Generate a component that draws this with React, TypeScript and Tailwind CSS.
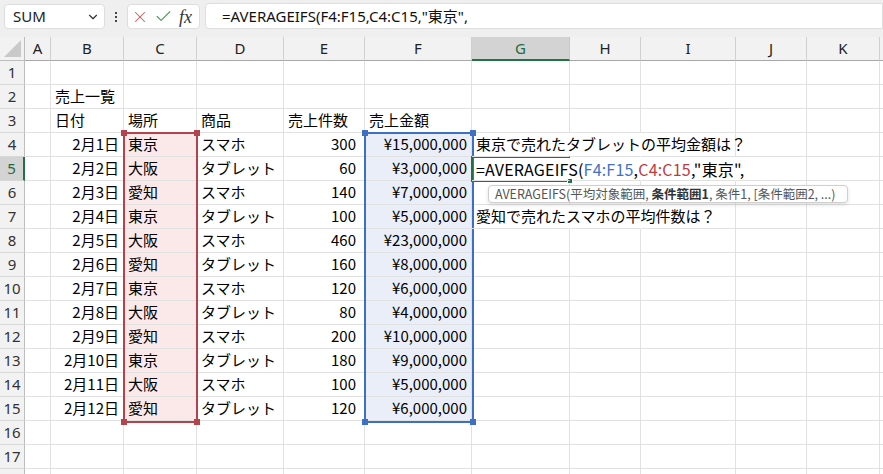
import React from "react";
import { ChevronDown, X, Check } from "lucide-react";

type CellDef = {
  t?: React.ReactNode;
  a?: "l" | "r";
  bg?: string;
  nr?: boolean;
  z?: boolean;
  pr?: string;
};

const colLetters = ["A", "B", "C", "D", "E", "F", "G", "H", "I", "J", "K", ""];

const data: [string, string, string, string, string][] = [
  ["2月1日", "東京", "スマホ", "300", "¥15,000,000"],
  ["2月2日", "大阪", "タブレット", "60", "¥3,000,000"],
  ["2月3日", "愛知", "スマホ", "140", "¥7,000,000"],
  ["2月4日", "東京", "タブレット", "100", "¥5,000,000"],
  ["2月5日", "大阪", "スマホ", "460", "¥23,000,000"],
  ["2月6日", "愛知", "タブレット", "160", "¥8,000,000"],
  ["2月7日", "東京", "スマホ", "120", "¥6,000,000"],
  ["2月8日", "大阪", "タブレット", "80", "¥4,000,000"],
  ["2月9日", "愛知", "スマホ", "200", "¥10,000,000"],
  ["2月10日", "東京", "タブレット", "180", "¥9,000,000"],
  ["2月11日", "大阪", "スマホ", "100", "¥5,000,000"],
  ["2月12日", "愛知", "タブレット", "120", "¥6,000,000"],
];

function buildRow(r: number): CellDef[] {
  const row: CellDef[] = Array.from({ length: 12 }, () => ({}));
  if (r === 2) row[1] = { t: "売上一覧" };
  if (r === 3) {
    row[1] = { t: "日付" };
    row[2] = { t: "場所" };
    row[3] = { t: "商品" };
    row[4] = { t: "売上件数" };
    row[5] = { t: "売上金額" };
  }
  if (r >= 4 && r <= 15) {
    const d = data[r - 4];
    row[1] = { t: d[0], a: "r" };
    row[2] = { t: d[1], bg: "bg-[#fbe9ea]" };
    row[3] = { t: d[2] };
    row[4] = { t: d[3], a: "r", pr: "pr-[8px]" };
    row[5] = { t: d[4], a: "r", bg: "bg-[#e9eef8]" };
  }
  if (r === 4) {
    row[6] = { t: "東京で売れたタブレットの平均金額は？", nr: true, z: true };
    row[7] = { nr: true };
  }
  if (r === 5) {
    row[6] = {
      t: (
        <span className="text-[16px] tracking-[0.2px]">
          {"=AVERAGEIFS("}
          <span className="text-[#3f72c6]">F4:F15</span>
          {","}
          <span className="text-[#c0393f]">C4:C15</span>
          {',"東京",'}
        </span>
      ),
      nr: true,
      z: true,
    };
    row[7] = { nr: true };
    row[8] = { nr: true };
  }
  if (r === 7) {
    row[6] = { t: "愛知で売れたスマホの平均件数は？", nr: true, z: true };
    row[7] = { nr: true };
  }
  return row;
}

function Handle({ className }: { className: string }) {
  return <div className={`absolute w-[6px] h-[6px] ${className}`} />;
}

export default function App() {
  const rows = Array.from({ length: 18 }, (_, i) => i + 1);
  return (
    <div
      className="w-[883px] h-[474px] overflow-hidden bg-white text-black"
      style={{ fontFamily: '"Noto Sans CJK JP", "Noto Sans", sans-serif' }}
    >
      {/* formula bar */}
      <div className="h-[37px] bg-[#efefef] flex items-start pt-[4px] pl-[4px]">
        <div className="w-[101px] h-[25px] bg-white border border-[#dedede] rounded-[4px] flex items-center justify-between pl-[8px] pr-[4px]">
          <span className="text-[15px] text-[#222]" style={{ fontFamily: '"Noto Sans", sans-serif' }}>SUM</span>
          <ChevronDown size={14} strokeWidth={2} className="text-[#333]" />
        </div>
        <div className="w-[22px] h-[25px] flex flex-col items-center justify-center gap-[2px]">
          <div className="w-[2px] h-[2px] bg-[#444]" />
          <div className="w-[2px] h-[2px] bg-[#444]" />
          <div className="w-[2px] h-[2px] bg-[#444]" />
        </div>
        <div className="w-[73px] h-[25px] bg-white border border-[#dedede] rounded-[4px] flex items-center pl-[3px] gap-[5px]">
          <X size={18} strokeWidth={1.4} className="text-[#d0575a]" />
          <Check size={19} strokeWidth={1.4} className="text-[#4f9b5d]" />
          <span
            className="italic text-[18px] text-[#333] leading-none ml-[1px]"
            style={{ fontFamily: '"Liberation Serif", serif' }}
          >
            fx
          </span>
        </div>
        <div
          className="ml-[5px] flex-1 h-[26px] -mt-[1px] bg-white border border-[#dedede] rounded-l-[4px] flex items-center pl-[16px] text-[15px] text-[#111]"
          style={{ fontFamily: '"Noto Sans", "Noto Sans CJK JP", sans-serif' }}
        >
          =AVERAGEIFS(F4:F15,C4:C15,"東京",
        </div>
      </div>

      {/* sheet */}
      <div className="relative">
        <div className="grid grid-cols-[25px_26px_73px_73px_87px_81px_107px_98px_71px_95px_71px_73px_1fr]">
          {/* corner */}
          <div className="h-[24px] bg-[#f2f2f2] border-r border-b border-[#bdbdbd] flex items-end justify-end pr-[3px] pb-[3px]">
            <svg width="17" height="17" viewBox="0 0 17 17">
              <polygon points="17,0 17,17 0,17" fill="#c9c9c9" />
            </svg>
          </div>
          {colLetters.map((c, i) => (
            <div
              key={i}
              className={`h-[24px] flex items-center justify-center text-[15px] border-r ${
                c === "G"
                  ? "bg-[#d3d3d3] text-[#1f6b3c] border-b-2 border-b-[#217346] border-r-[#c8c8c8]"
                  : "bg-[#f2f2f2] text-[#222] border-b border-b-[#a8a8a8] border-r-[#d0d0d0]"
              }`}
              style={{ fontFamily: '"Noto Sans", sans-serif' }}
            >
              {c}
            </div>
          ))}
          {rows.map((r) => {
            const cells = buildRow(r);
            return (
              <React.Fragment key={r}>
                <div
                  className={`h-[24px] flex items-center justify-center text-[15px] border-b border-b-[#d8d8d8] ${
                    r === 5
                      ? "bg-[#d3d3d3] text-[#1f6b3c] border-r-2 border-r-[#217346]"
                      : "bg-[#f2f2f2] text-[#333] border-r border-r-[#bdbdbd]"
                  }`}
                  style={{ fontFamily: '"Noto Sans", sans-serif' }}
                >
                  {r}
                </div>
                {cells.map((c, i) => (
                  <div
                    key={i}
                    className={`h-[24px] flex items-center border-b border-b-[#e1e1e1] text-[15px] whitespace-nowrap ${
                      c.nr ? "border-r border-r-transparent" : "border-r border-r-[#e1e1e1]"
                    } ${c.bg ?? ""} ${c.a === "r" ? "justify-end " + (c.pr ?? "pr-[4px]") : "pl-[4px]"} ${
                      c.z ? "relative z-30 overflow-visible" : "overflow-hidden"
                    }`}
                  >
                    {c.t}
                  </div>
                ))}
              </React.Fragment>
            );
          })}
        </div>

        {/* red range C4:C15 */}
        <div className="absolute left-[123px] top-[95px] w-[75px] h-[291px] border-2 border-[#b5434b] pointer-events-none">
          <Handle className="bg-[#b5434b] -left-[4px] -top-[4px]" />
          <Handle className="bg-[#b5434b] -right-[4px] -top-[4px]" />
          <Handle className="bg-[#b5434b] -left-[4px] -bottom-[4px]" />
          <Handle className="bg-[#b5434b] -right-[4px] -bottom-[4px]" />
        </div>

        {/* blue range F4:F15 */}
        <div className="absolute left-[364px] top-[95px] w-[110px] h-[291px] border-2 border-[#3d6fc3] pointer-events-none">
          <Handle className="bg-[#3d6fc3] -left-[4px] -top-[4px]" />
          <Handle className="bg-[#3d6fc3] -right-[4px] -top-[4px]" />
          <Handle className="bg-[#3d6fc3] -left-[4px] -bottom-[4px]" />
          <Handle className="bg-[#3d6fc3] -right-[4px] -bottom-[4px]" />
        </div>

        {/* active cell G5 (editing) */}
        <div className="absolute left-[471px] top-[119px] w-[99px] h-[26px] border-2 border-r-0 border-[#217346] pointer-events-none z-20">
          <div className="absolute -right-[3px] -bottom-[4px] w-[6px] h-[6px] bg-[#217346] border border-white" />
        </div>

        {/* tooltip */}
        <div className="absolute left-[488px] top-[148px] w-[360px] h-[18px] bg-white border border-[#cfcfcf] rounded-[4px] shadow-[0_2px_4px_rgba(0,0,0,0.12)] flex items-center pl-[6px] text-[12.5px] text-[#555] whitespace-pre z-40">
          <span>{"AVERAGEIFS(平均対象範囲, "}</span>
          <span className="font-bold text-[#333]">条件範囲1</span>
          <span>{", 条件1, [条件範囲2, ...)"}</span>
        </div>
      </div>
    </div>
  );
}
